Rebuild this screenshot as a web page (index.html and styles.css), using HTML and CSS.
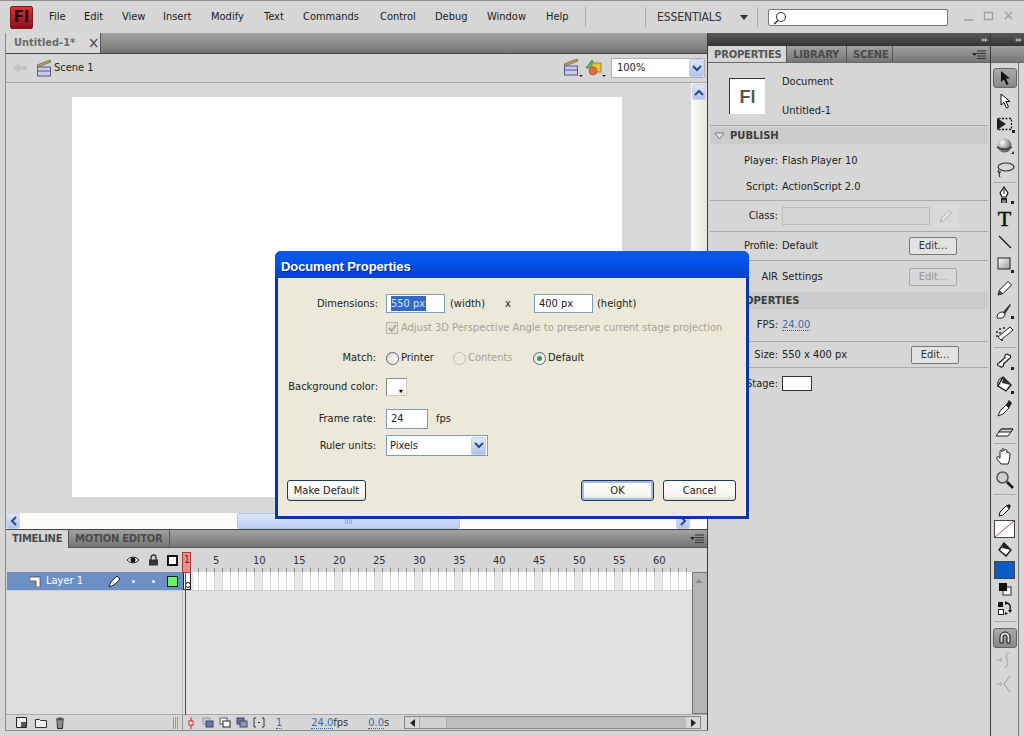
FILE: index.html
```html
<!DOCTYPE html>
<html lang="en">
<head>
<meta charset="utf-8">
<title>Adobe Flash - Document Properties</title>
<link rel="stylesheet" href="styles.css">
</head>
<body>
<div class="app">
  <header class="menubar">
    <div class="logo">Fl</div>
    <nav class="menu">
      <span class="mi m-file">File</span><span class="mi m-edit">Edit</span><span class="mi m-view">View</span><span class="mi m-insert">Insert</span><span class="mi m-modify">Modify</span><span class="mi m-text">Text</span><span class="mi m-commands">Commands</span><span class="mi m-control">Control</span><span class="mi m-debug">Debug</span><span class="mi m-window">Window</span><span class="mi m-help">Help</span>
    </nav>
    <i class="vsep s1"></i><i class="vsep s2"></i>
    <span class="essentials">ESSENTIALS</span><i class="caret"></i><i class="vsep s3"></i>
    <div class="search"><svg width="16" height="16" viewBox="0 0 16 16"><circle cx="9" cy="7" r="4.500" fill="#fff" stroke="#444" stroke-width="1.200"/><path d="M6 10.500 2 14" stroke="#333" stroke-width="1.600"/></svg></div>
    <div class="winbtns">
      <svg width="60" height="14" viewBox="0 0 60 14"><path d="M1 10h9" stroke="#a9a9a9" stroke-width="2"/><rect x="21.500" y="2.500" width="8" height="7" fill="none" stroke="#a0a0a0" stroke-width="1.400"/><path d="M42 2l7 7M49 2l-7 7" stroke="#a9a9a9" stroke-width="1.800"/></svg>
    </div>
  </header>

  <div class="main">
    <section class="left">
      <div class="doctabs"><div class="doctab"><span class="doctab-name">Untitled-1*</span><span class="doctab-x">×</span></div></div>
      <div class="scenebar">
        <svg class="back" width="16" height="12" viewBox="0 0 16 12"><path d="M1 6l6-5v3h8v4H7v3z" fill="#c2c2c2"/></svg>
        <svg class="clap" width="16" height="18" viewBox="0 0 16 18"><path d="M1 6 14 1l1 2L2 8z" fill="#b6a53a" stroke="#555" stroke-width=".6"/><rect x="1.500" y="8" width="13" height="9" fill="#c9cbe8" stroke="#55588a"/><path d="M2 12h12" stroke="#55588a"/></svg>
        <span class="scene-name">Scene 1</span>
        <span class="spacer"></span>
        <svg class="clap2" width="20" height="20" viewBox="0 0 20 20"><path d="M1 6 14 1l1 2L2 8z" fill="#b6a53a" stroke="#555" stroke-width=".6"/><rect x="1.500" y="8" width="13" height="9" fill="#c9cbe8" stroke="#55588a"/><path d="M2 12h12" stroke="#55588a"/><path d="M16 17h4l-2 2z" fill="#222"/></svg>
        <svg class="symb" width="22" height="20" viewBox="0 0 22 20"><path d="M1 10 7 2l5 8z" fill="#5eb06a" stroke="#46784a" stroke-width=".8"/><rect x="7" y="5" width="9" height="9" fill="#e6c83c" stroke="#9a8a30"/><circle cx="8" cy="13" r="4" fill="#e0703a" stroke="#a04a20" stroke-width=".6"/><path d="M17 17h4l-2 2z" fill="#222"/></svg>
        <div class="zoombox"><span class="zoomval">100%</span><span class="combo-btn"><svg width="10" height="7" viewBox="0 0 10 7"><path d="M1 1l4 4 4-4" fill="none" stroke="#2b4a80" stroke-width="2"/></svg></span></div>
      </div>
      <div class="stagewrap">
        <div class="stageview"><div class="stage"></div></div>
        <div class="vscroll"><span class="sbtn"><svg width="10" height="7" viewBox="0 0 10 7"><path d="M1 6l4-4 4 4" fill="none" stroke="#2b4a80" stroke-width="2"/></svg></span></div>
      </div>
      <div class="hscroll">
        <span class="sbtn hb"><svg width="7" height="10" viewBox="0 0 7 10"><path d="M6 1 2 5l4 4" fill="none" stroke="#2b4a80" stroke-width="2"/></svg></span>
        <span class="hthumb"><span class="grip">IIII</span></span>
        <span class="spacer"></span>
        <span class="sbtn hb"><svg width="7" height="10" viewBox="0 0 7 10"><path d="M1 1l4 4-4 4" fill="none" stroke="#2b4a80" stroke-width="2"/></svg></span>
      </div>

      <div class="tltabs">
        <span class="tltab on">TIMELINE</span><span class="tltab mot">MOTION EDITOR</span><span class="spacer"></span>
        <svg class="pmenu" width="14" height="9" viewBox="0 0 14 9"><path d="M0 3h5L2.500 6z" fill="#222"/><path d="M5 1h9M5 3.500h9M5 6h9M5 8.500h9" stroke="#333"/></svg>
      </div>
      <div class="tlgrid">
        <div class="tlhead-left">
          <svg class="eye" width="14" height="10" viewBox="0 0 14 10"><path d="M1 5q6-6 12 0-6 6-12 0z" fill="#fff" stroke="#222"/><circle cx="7" cy="5" r="2.500" fill="#111"/></svg>
          <svg class="lock" width="11" height="12" viewBox="0 0 11 12"><path d="M3 6V3.500a2.500 2.500 0 0 1 5 0V6" fill="none" stroke="#333" stroke-width="1.400"/><rect x="1" y="5.500" width="9" height="6" fill="#333"/></svg>
          <span class="outline"></span>
        </div>
        <div class="ruler">
          <div class="ruler-nums"><span class="n">5</span><span class="n">10</span><span class="n">15</span><span class="n">20</span><span class="n">25</span><span class="n">30</span><span class="n">35</span><span class="n">40</span><span class="n">45</span><span class="n">50</span><span class="n">55</span><span class="n">60</span></div>
          <div class="ticks"></div>
        </div>
        <div class="tlscroll"><svg width="12" height="8" viewBox="0 0 12 8"><path d="M2 6l4-4 4 4z" fill="#8a8a8a"/></svg></div>
        <div class="layer">
          <svg class="lay-ic" width="11" height="11" viewBox="0 0 11 11"><path d="M0 1h10v10H6V5H0z" fill="#fff" stroke="#333" stroke-width=".7"/></svg>
          <span class="lay-name">Layer 1</span>
          <svg class="lay-pen" width="13" height="13" viewBox="0 0 13 13"><path d="M1 12l2-5 6-6 3 3-6 6z" fill="#fff" stroke="#222"/></svg>
          <i class="dot d1"></i><i class="dot d2"></i><span class="lay-col"></span>
        </div>
        <div class="frames"><span class="kf"></span></div>
        <div class="tlbody-left"></div>
        <div class="tlbody-right"></div>
        <div class="tlfoot-left">
          <svg class="f1" width="11" height="11" viewBox="0 0 11 11"><path d="M.5.500h10v10H.5z" fill="#eee" stroke="#222"/><path d="M5 5h5v5H5z" fill="#555"/></svg>
          <svg class="f2" width="12" height="10" viewBox="0 0 12 10"><path d="M.5 1.500h4l1 1h6v7H.5z" fill="#eee" stroke="#333"/></svg>
          <svg class="f3" width="10" height="12" viewBox="0 0 10 12"><path d="M2 3h6l-.5 8.500h-5zM1 2h8M3.500 1h3M4 4v7M6 4v7" fill="#eee" stroke="#222"/></svg>
          <span class="grip-v"></span>
        </div>
        <div class="tlfoot-right">
          <svg class="ok-m" width="6" height="12" viewBox="0 0 6 12"><path d="M3 0v12" stroke="#c8242a"/><rect x="1" y="4" width="4" height="4" fill="#fff" stroke="#c8242a"/></svg>
          <svg class="on1" width="12" height="11" viewBox="0 0 12 11"><rect x="1" y="1" width="7" height="6" fill="#ccd" stroke="#99a"/><rect x="4" y="4" width="7" height="6" fill="#667ab0" stroke="#445"/></svg>
          <svg class="on2" width="12" height="11" viewBox="0 0 12 11"><rect x="1" y="1" width="7" height="6" fill="#fff" stroke="#556"/><rect x="4" y="4" width="7" height="6" fill="#fff" stroke="#223"/></svg>
          <svg class="on3" width="12" height="11" viewBox="0 0 12 11"><rect x="1" y="1" width="7" height="6" fill="#667ab0" stroke="#445"/><rect x="4" y="4" width="7" height="6" fill="#8a98c4" stroke="#445"/></svg>
          <svg class="on4" width="12" height="11" viewBox="0 0 12 11"><path d="M3 1H1v9h2M9 1h2v9H9" fill="none" stroke="#334"/><path d="M5 5.500h2" stroke="#334"/></svg>
          <span class="lnk cur">1</span><span class="lnk fps">24.0</span><span class="unit">fps</span><span class="lnk sec">0.0</span><span class="unit">s</span>
          <div class="fscroll"><span class="fs-arrow"><svg width="5" height="8" viewBox="0 0 5 8"><path d="M5 0v8L0 4z" fill="#222"/></svg></span><span class="fs-thumb"></span><span class="spacer"></span><span class="fs-end"><svg width="5" height="8" viewBox="0 0 5 8"><path d="M0 0v8l5-4z" fill="#222"/></svg></span></div>
        </div>
        <div class="playhead"><span class="ph-num">1</span></div>
      </div>
    </section>

    <aside class="panel">
      <div class="darkbar"><span class="dbl">▸▸</span></div>
      <div class="ptabs">
        <span class="ptab on">PROPERTIES</span><span class="ptab lib">LIBRARY</span><span class="ptab sce">SCENE</span><span class="spacer"></span>
        <svg class="pmenu" width="14" height="9" viewBox="0 0 14 9"><path d="M0 3h5L2.500 6z" fill="#222"/><path d="M5 1h9M5 3.500h9M5 6h9M5 8.500h9" stroke="#333"/></svg>
      </div>
      <div class="dochead">
        <div class="flicon">Fl</div>
        <div class="docinfo"><span>Document</span><span>Untitled-1</span></div>
      </div>
      <div class="sechead"><svg width="11" height="8" viewBox="0 0 11 8"><path d="M1 1h9L5.500 7z" fill="#e8e8e8" stroke="#777"/></svg><span>PUBLISH</span></div>
      <div class="prow r-player"><label>Player:</label><span>Flash Player 10</span></div>
      <div class="prow r-script line"><label>Script:</label><span>ActionScript 2.0</span></div>
      <div class="prow r-class line"><label>Class:</label><span class="classbox"></span><span class="penbtn"><svg width="14" height="14" viewBox="0 0 14 14"><path d="M1 13l1.500-4L10 1.500l2.500 2.500L5 11.500z" fill="#e6e6e6" stroke="#a8a8a8"/></svg></span></div>
      <div class="prow r-profile line"><label>Profile:</label><span>Default</span><span class="spacer"></span><span class="editbtn">Edit...</span></div>
      <div class="prow r-air"><label>AIR</label><span>Settings</span><span class="spacer"></span><span class="editbtn dis">Edit...</span></div>
      <div class="sechead r-prop"><svg width="11" height="8" viewBox="0 0 11 8"><path d="M1 1h9L5.500 7z" fill="#e8e8e8" stroke="#777"/></svg><span>PROPERTIES</span></div>
      <div class="prow r-fps line"><label>FPS:</label><span class="lnk">24.00</span></div>
      <div class="prow r-size line"><label>Size:</label><span>550 x 400 px</span><span class="spacer"></span><span class="editbtn">Edit...</span></div>
      <div class="prow r-stage"><label>Stage:</label><span class="stageswatch"></span></div>
    </aside>

    <aside class="tools">
      <div class="darkbar"><span class="dbl">▸▸</span></div>
      <div class="ttab"></div>
      <div class="toolcol">
        <span class="tool active"><svg width="16" height="16" viewBox="0 0 16 16"><path d="M4 1v11l3-2.500L9.500 15l2-1L9 8.500h4z" fill="#111"/></svg></span>
        <span class="tool"><svg width="16" height="16" viewBox="0 0 16 16"><path d="M4 1v11l3-2.500L9.500 15l2-1L9 8.500h4z" fill="#fff" stroke="#111"/></svg></span>
        <span class="tool"><svg width="20" height="18" viewBox="0 0 20 18"><path d="M2 3l9 6-9 6z" fill="#222"/><rect x="3.500" y="3.500" width="13" height="11" fill="none" stroke="#111" stroke-dasharray="2 1.500" stroke-width="1.300"/><path d="M17 15h3v3h-3z" fill="#222"/></svg></span>
        <span class="tool"><svg width="20" height="20" viewBox="0 0 20 20"><defs><radialGradient id="ball" cx=".35" cy=".3" r=".8"><stop offset="0" stop-color="#fff"/><stop offset="1" stop-color="#444"/></radialGradient></defs><circle cx="9.500" cy="8.500" r="7" fill="url(#ball)"/><path d="M2 10c3 3 11 3 15 0" fill="none" stroke="#333" stroke-width="1.400"/><path d="M16 17h3v-3z" fill="#222"/></svg></span>
        <span class="tool"><svg width="20" height="18" viewBox="0 0 20 18"><ellipse cx="11" cy="6" rx="8" ry="4" fill="none" stroke="#333" stroke-width="1.200"/><path d="M4 9c-2 2 0 3 1 2s-2 2 0 5" fill="none" stroke="#333" stroke-width="1.200"/></svg></span>
        <i class="tsep s-a"></i>
        <span class="tool"><svg width="20" height="20" viewBox="0 0 20 20"><path d="M9 1l4 6-2 4H7L5 7z" fill="#fff" stroke="#111" stroke-width="1.200"/><path d="M9 3v5" stroke="#111"/><path d="M6 12h6v5h-1.500v-3h-1v3h-1v-3h-1v3H6z" fill="#222"/><path d="M16 15h3v3h-3z" fill="#222"/></svg></span>
        <span class="tool tchar">T</span>
        <span class="tool"><svg width="16" height="16" viewBox="0 0 16 16"><path d="M2 2l12 12" stroke="#111" stroke-width="1.200"/></svg></span>
        <span class="tool"><svg width="20" height="18" viewBox="0 0 20 18"><defs><linearGradient id="rg" x1="0" y1="0" x2="1" y2="1"><stop offset="0" stop-color="#fff"/><stop offset="1" stop-color="#999"/></linearGradient></defs><rect x="3" y="2" width="12" height="11" fill="url(#rg)" stroke="#222"/><path d="M16 14h3v3h-3z" fill="#222"/></svg></span>
        <span class="tool"><svg width="16" height="16" viewBox="0 0 16 16"><path d="M1 15l1.500-5L11 1.500 14.500 5 6 13.500z" fill="#fff" stroke="#111"/><path d="M1 15l1.500-5 3.500 3.500z" fill="#444"/></svg></span>
        <span class="tool"><svg width="20" height="18" viewBox="0 0 20 18"><path d="M2 16c0-5 3-6 6-6l2 2c0 3-3 5-8 4z" fill="#eee" stroke="#222"/><path d="M8 10l7-8 1 1-6 9z" fill="#333"/><path d="M16 14h3v3h-3z" fill="#222"/></svg></span>
        <span class="tool"><svg width="20" height="16" viewBox="0 0 20 16"><path d="M6 14l-3-3L15 1l3 3z" fill="#fff" stroke="#222"/><g fill="#222"><circle cx="2" cy="6" r="1"/><circle cx="5" cy="3" r="1"/><circle cx="9" cy="2" r="1"/><circle cx="2" cy="10" r="1"/><circle cx="5" cy="7" r="1"/><circle cx="7" cy="14" r="1"/></g></svg></span>
        <i class="tsep s-b"></i>
        <span class="tool"><svg width="20" height="18" viewBox="0 0 20 18"><path d="M4 10 10 4.500C9 2 12 0 13.500 2c2-.5 3 2 1 3.500L8.500 11c1 3-3 4-4 2-2.500 0-2.500-3-.5-3z" fill="#fff" stroke="#222" stroke-width="1.200"/><path d="M16 14h3v3h-3z" fill="#222"/></svg></span>
        <span class="tool"><svg width="20" height="20" viewBox="0 0 20 20"><path d="M8 2l8 8-5 6-8-5z" fill="#fff" stroke="#111" stroke-width="1.300"/><path d="M3 11c-1-4 1-8 4-8" fill="none" stroke="#111"/><path d="M8 2l8 8-9-2z" fill="#333"/><path d="M16 16h3v3h-3z" fill="#222"/></svg></span>
        <span class="tool"><svg width="16" height="18" viewBox="0 0 16 18"><path d="M1 17l2-5 6-6 3 3-6 6z" fill="#fff" stroke="#222"/><path d="M9 6l3-5 3 3-3 5z" fill="#222"/></svg></span>
        <span class="tool"><svg width="20" height="16" viewBox="0 0 20 16"><path d="M1 13l5-7h12l-5 7z" fill="#fff" stroke="#222"/><path d="M6 6h12l-2 3H4z" fill="#ccc" stroke="#222"/></svg></span>
        <i class="tsep s-c"></i>
        <span class="tool"><svg width="20" height="20" viewBox="0 0 20 20"><path d="M6 17c-2-3-5-5-4-7 1-1 2 0 3 1V5c0-2 2-2 2 0V3c0-2 2-2 2 0v1c0-2 3-2 3 0v2c0-1 3-1 3 1 0 4-1 7-2 10z" fill="#fff" stroke="#222"/></svg></span>
        <span class="tool"><svg width="20" height="20" viewBox="0 0 20 20"><circle cx="7.500" cy="7.500" r="5.500" fill="#cfcfcf" stroke="#555" stroke-width="1.500"/><path d="M12 12l6 6" stroke="#111" stroke-width="2.500"/></svg></span>
        <i class="tsep s-d"></i>
        <span class="tool short"><svg width="16" height="14" viewBox="0 0 16 14"><path d="M2 13l1-4 7-7 3 3-7 7z" fill="#fff" stroke="#111"/><path d="M9 3l3 3 2-3-2-2z" fill="#222"/></svg></span>
        <span class="swatch stroke"><svg width="19" height="16" viewBox="0 0 19 16" preserveAspectRatio="none"><path d="M0 16 19 0" stroke="#b4453f"/></svg></span>
        <span class="tool"><svg width="16" height="16" viewBox="0 0 16 16"><path d="M7 1l7 7-5 6-7-6z" fill="#fff" stroke="#111" stroke-width="1.300"/><path d="M7 1l7 7-9-2z" fill="#222"/></svg></span>
        <span class="swatch fill"></span>
        <span class="tool mini"><svg width="14" height="14" viewBox="0 0 14 14"><rect x="5" y="5" width="8" height="8" fill="#fff" stroke="#222"/><rect x="1" y="1" width="8" height="8" fill="#111"/></svg></span>
        <span class="tool mini2"><svg width="16" height="14" viewBox="0 0 16 14"><rect x="1" y="1" width="5" height="5" fill="#111"/><rect x="1.500" y="8.500" width="5" height="5" fill="#fff" stroke="#222"/><path d="M9 2c4 0 5 3 4 7" fill="none" stroke="#111" stroke-width="1.400"/><path d="M8 0v4l3-2zM11 9h4l-2 3zM8 11v3l3-1.500z" fill="#111"/></svg></span>
        <i class="tsep s-e"></i>
        <span class="tool magnet"><svg width="16" height="16" viewBox="0 0 16 16"><path d="M3 13V7a5 5 0 0 1 10 0v6h-3V7a2 2 0 0 0-4 0v6z" fill="#dedede" stroke="#111"/></svg></span>
        <span class="tool"><svg width="20" height="20" viewBox="0 0 20 20"><path d="M14 2c-8 2 4 8-4 15" fill="none" stroke="#b0b0b0" stroke-width="1.400"/><path d="M1 9h6M5 7l2 2-2 2" fill="none" stroke="#a8a8a8"/></svg></span>
        <span class="tool"><svg width="20" height="20" viewBox="0 0 20 20"><path d="M15 2 9 10l6 8" fill="none" stroke="#b0b0b0" stroke-width="1.400"/><path d="M1 10h6M5 8l2 2-2 2" fill="none" stroke="#a8a8a8"/></svg></span>
      </div>
    </aside>
  </div>

  <div class="dialog">
    <div class="dlg-title">Document Properties</div>
    <div class="dlg-body">
      <div class="drow d-dim"><label>Dimensions:</label><span class="tb w-dim"><span class="sel">550 px</span></span><span class="t-w">(width)</span><span class="t-x">x</span><span class="tb w-dim"><span class="val">400 px</span></span><span class="t-h">(height)</span></div>
      <div class="drow d-chk"><label></label><span class="chk"><svg width="11" height="11" viewBox="0 0 11 11"><path d="M2 5l2.500 3L9 2" fill="none" stroke="#a8a8a0" stroke-width="2"/></svg></span><span class="dis-t">Adjust 3D Perspective Angle to preserve current stage projection</span></div>
      <div class="drow d-match"><label class="lb2">Match:</label><span class="radio"></span><span class="r-t t1">Printer</span><span class="radio off"></span><span class="r-t t2 dis-t">Contents</span><span class="radio on"></span><span class="r-t">Default</span></div>
      <div class="drow d-bg"><label>Background color:</label><span class="colorbtn"><i class="cb-arrow"></i></span></div>
      <div class="drow d-fr"><label class="lb2">Frame rate:</label><span class="tb w-fr"><span class="val">24</span></span><span class="t-fps">fps</span></div>
      <div class="drow d-ru"><label class="lb2">Ruler units:</label><span class="select"><span class="sel-v">Pixels</span><span class="combo-btn"><svg width="10" height="7" viewBox="0 0 10 7"><path d="M1 1l4 4 4-4" fill="none" stroke="#2b4a80" stroke-width="2"/></svg></span></span></div>
      <div class="dbtns"><span class="xpbtn b-make">Make Default</span><span class="spacer"></span><span class="xpbtn b-act b-ok">OK</span><span class="xpbtn b-act">Cancel</span></div>
    </div>
  </div>
</div>
</body>
</html>
```
FILE: styles.css
```css
* { box-sizing: border-box; }
html, body { margin: 0; padding: 0; }
body { background: #d6d6d6; font: 11px/14px "DejaVu Sans Condensed", "DejaVu Sans", sans-serif; font-stretch: condensed; color: #222; }
svg { display: block; flex: none; }
.spacer { flex: 1; }
.app { position: relative; width: 1024px; height: 736px; overflow: hidden; display: flex; flex-direction: column; background: #d6d6d6; border-top: 1px solid #8f8f8f; }

/* menu bar */
.menubar { height: 32px; display: flex; align-items: center; position: relative; }
.logo { width: 23px; height: 23px; margin-left: 10px; background: linear-gradient(#e0303c, #8d0f1c); border: 1px solid #7c1a20; border-radius: 2px; color: #260404; font: bold 15px/21px "DejaVu Sans", sans-serif; text-align: center; }
.menu { display: flex; margin-left: 16px; }
.mi { color: #1c1c1c; }
.m-file { width: 35px; } .m-edit { width: 38px; } .m-view { width: 41px; } .m-insert { width: 48px; } .m-modify { width: 53px; }
.m-text { width: 39px; } .m-commands { width: 77px; } .m-control { width: 55px; } .m-debug { width: 52px; } .m-window { width: 59px; } .m-help { width: 39px; }
.vsep { width: 1px; height: 20px; background: #aaa; }
.s1 { margin-left: 0; } .s2 { margin-left: 59px; }
.essentials { margin-left: 11px; width: 83px; font: 12px/14px "DejaVu Sans Condensed", "DejaVu Sans", sans-serif; letter-spacing: -.1px; color: #333; }
.caret { width: 0; height: 0; border: 4px solid transparent; border-top: 5px solid #333; border-bottom: 0; }
.s3 { margin-left: 9px; }
.search { margin-left: 10px; width: 180px; height: 17px; background: #fff; border: 1px solid #777; border-radius: 2px; padding-left: 3px; }
.winbtns { margin-left: 15px; }

/* main layout */
.main { flex: 1; display: flex; padding-left: 5px; min-height: 0; }
.left { width: 703px; display: flex; flex-direction: column; border-right: 1px solid #3c3c3c; border-left: 1px solid #8a8a8a; height: 698px; border-bottom: 1px solid #8a8a8a; }
.doctabs { height: 21px; flex: none; background: linear-gradient(#a2a2a2, #757575); border-bottom: 1px solid #444; }
.doctab { width: 95px; height: 20px; background: #d8d8d8; display: flex; align-items: center; padding-left: 8px; border-right: 1px solid #555; }
.doctab-name { width: 74px; font-weight: bold; color: #6b6b6b; font-size: 11px; }
.doctab-x { font-size: 15px; color: #444; }
.scenebar { height: 29px; flex: none; display: flex; align-items: center; border-bottom: 1px solid #a8a8a8; padding-left: 6px; }
.back { margin-right: 14px; }
.clap { margin-right: 2px; margin-left: -6px; }
.clap2 { margin-right: 2px; }
.symb { margin-right: 0; }
.scene-name { color: #222; }
.zoombox { width: 94px; height: 20px; margin-left: 4px; margin-right: 2px; background: #fff; border: 1px solid #b0b0b0; display: flex; align-items: center; justify-content: space-between; padding-left: 5px; }
.combo-btn { width: 15px; height: 18px; background: linear-gradient(#dfe7f9, #b0c2ea); border: 1px solid #c6d2ee; border-radius: 2px; display: flex; align-items: center; justify-content: center; }
.stagewrap { height: 430px; flex: none; display: flex; }
.stageview { flex: 1; padding: 14px 0 0 66px; background: #d8d8d8; }
.stage { width: 550px; height: 400px; background: #fff; }
.vscroll { width: 16px; background: linear-gradient(90deg, #fdfcf6, #e8e6dc); padding: 1px; }
.sbtn { display: flex; align-items: center; justify-content: center; width: 14px; height: 16px; background: linear-gradient(#dfe7f9, #b0c2ea); border: 1px solid #c6d2ee; border-radius: 2px; }
.hscroll { height: 16px; flex: none; display: flex; background: #fdfcf6; padding-right: 17px; }
.hthumb { margin-left: 217px; width: 223px; background: linear-gradient(#dce6fb, #bccdf2); border: 1px solid #b4c5ea; border-radius: 2px; text-align: center; }
.grip { font-size: 8px; line-height: 12px; color: #8a9bc0; }

/* timeline */
.tltabs { height: 19px; flex: none; display: flex; background: linear-gradient(#a2a2a2, #757575); border-top: 1px solid #444; border-bottom: 1px solid #555; align-items: center; padding-right: 2px; }
.tltab { height: 18px; padding: 0 6px; font: bold 10px/18px "DejaVu Sans", sans-serif; letter-spacing: -.3px; color: #4a4a4a; border-right: 1px solid #555; width: 101px; white-space: nowrap; }
.tltab.on { background: #d6d6d6; width: 63px; }
.pmenu { margin-right: 1px; }
.tlgrid { position: relative; flex: 1; display: grid; grid-template-columns: 177px 509px 15px; grid-template-rows: 24px 19px 1fr 16px; }
.tlhead-left { grid-column: 1; grid-row: 1; display: flex; align-items: center; padding-left: 120px; position: relative; }
.lock { margin-left: 8px; }
.outline { width: 11px; height: 11px; border: 2px solid #111; margin-left: 8px; background: #fff; }
.ruler { grid-column: 2; grid-row: 1; display: flex; flex-direction: column; }
.ruler-nums { flex: 1; display: flex; padding-top: 6px; padding-left: 30px; }
.n { width: 40px; flex: none; color: #333; }
.ticks { height: 4px; background: repeating-linear-gradient(90deg, #d6d6d6 0 7px, #888 7px 8px); }
.tlscroll { grid-column: 3; grid-row: 2 / 4; background: #b4b4b4; border: 1px solid #777; border-right: 0; }
.tlscroll svg { margin: 4px 0 4px; }
.tlscroll::before { content: ""; display: none; }
.layer { grid-column: 1; grid-row: 2; margin-left: 1px; background: #6c90c4; display: flex; align-items: center; position: relative; border-bottom: 1px solid #ccc; }
.lay-ic { margin-left: 23px; }
.lay-name { margin-left: 5px; color: #fff; width: 62px; }
.dot { width: 3px; height: 3px; border-radius: 50%; background: #fff; flex: none; }
.d1 { margin-left: 11px; } .d2 { margin-left: 17px; }
.lay-col { width: 11px; height: 11px; margin-left: 12px; background: #66f266; border: 1px solid #111; }
.frames { grid-column: 2; grid-row: 2; position: relative; border-bottom: 1px solid #ccc; background:
  repeating-linear-gradient(90deg, transparent 0 7px, #d4d4d4 7px 8px),
  repeating-linear-gradient(90deg, #e8e8e8 0 8px, #fff 8px 40px);
  background-position: 0 0, 32px 0; }
.kf { position: absolute; left: 0; top: 0; width: 8px; height: 18px; background: #fff; border: 1px solid #222; }
.kf::after { content: ""; position: absolute; left: 1px; top: 9px; width: 4px; height: 4px; border: 1px solid #111; border-radius: 50%; }
.tlbody-left { grid-column: 1; grid-row: 3; background: #dedede; margin-left: 1px; border-right: 1px solid #bbb; }
.tlbody-right { grid-column: 2; grid-row: 3; background: #e2e2e2; }
.tlfoot-left { grid-column: 1; grid-row: 4; display: flex; align-items: center; padding-left: 10px; border-top: 1px solid #aaa; border-right: 1px solid #999; }
.f2 { margin-left: 8px; } .f3 { margin-left: 8px; }
.grip-v { width: 5px; height: 12px; margin-left: 108px; background: repeating-linear-gradient(90deg, #999 0 1px, #ddd 1px 2px); }
.tlfoot-right { grid-column: 2 / 4; grid-row: 4; display: flex; align-items: center; border-top: 1px solid #aaa; padding-left: 5px; }
.on1 { margin-left: 8px; } .on2, .on3, .on4 { margin-left: 5px; }
.lnk { color: #3a6aa8; border-bottom: 1px dotted #3a6aa8; line-height: 11px; }
.unit { color: #333; }
.cur { margin-left: 11px; } .fps { margin-left: 29px; } .sec { margin-left: 20px; }
.fscroll { width: 297px; height: 13px; margin-left: 15px; display: flex; background: #bdbdbd; border: 1px solid #888; }
.fs-arrow, .fs-end { width: 14px; display: flex; align-items: center; justify-content: center; background: #d6d6d6; }
.fs-thumb { width: 28px; background: #d0d0d0; border: 1px solid #aaa; border-width: 0 1px; }
.playhead { position: absolute; left: 176px; top: 4px; width: 9px; height: 21px; background: #f78c8c; border: 1px solid #a03c3c; }
.playhead::after { content: ""; position: absolute; left: 2px; top: 19px; width: 1px; height: 143px; background: #c41818; }
.ph-num { position: absolute; left: 1px; top: 0; font-size: 10px; color: #333; }

/* properties */
.panel { width: 283px; flex: none; display: flex; flex-direction: column; border-right: 1px solid #3c3c3c; height: 703px; }
.darkbar { height: 13px; flex: none; background: linear-gradient(#5a5a5a, #333); color: #aaa; font-size: 8px; line-height: 13px; text-align: right; padding-right: 3px; }
.dbl { letter-spacing: -1px; }
.ptabs { height: 17px; flex: none; display: flex; align-items: center; background: linear-gradient(#a2a2a2, #757575); border-bottom: 1px solid #666; padding-right: 3px; }
.ptab { height: 16px; font: bold 10px/18px "DejaVu Sans", sans-serif; letter-spacing: -.2px; color: #4a4a4a; padding: 0 6px; border-right: 1px solid #555; }
.ptab.on { width: 79px; background: #d6d6d6; color: #555; }
.lib { width: 60px; } .sce { width: 46px; }
.dochead { height: 63px; flex: none; display: flex; margin: 0 2px; border-bottom: 1px solid #aaa; padding: 15px 0 0 19px; }
.flicon { width: 36px; height: 36px; background: #fff; border-top: 1px solid #333; border-left: 1px solid #333; color: #555; font: bold 18px/36px "Liberation Sans", sans-serif; text-align: center; }
.docinfo { display: flex; flex-direction: column; margin-left: 17px; gap: 15px; margin-top: -3px; }
.sechead { height: 17px; flex: none; margin: 1px 2px 0; background: #cbcbcb; display: flex; align-items: center; gap: 5px; padding-left: 4px; font: bold 10px/17px "DejaVu Sans", sans-serif; color: #3c3c3c; }
.prow { display: flex; align-items: center; flex: none; margin: 0 2px; padding-right: 31px; }
.prow label { width: 68px; text-align: right; margin-right: 4px; }
.line { border-bottom: 1px solid #aaa; }
.r-player { height: 26px; margin-top: 4px; }
.r-script { height: 27px; }
.r-class { height: 31px; padding-right: 0; }
.r-profile { height: 29px; }
.r-air { height: 31px; }
.r-prop { margin-top: 0; }
.r-fps { height: 33px; }
.r-size { height: 26px; }
.r-stage { height: 31px; }
.classbox { width: 148px; height: 18px; background: #d6d6d6; border: 1px solid #bcbcb4; }
.penbtn { width: 24px; height: 24px; margin-left: 4px; background: #dadada; display: flex; align-items: center; justify-content: center; }
.editbtn { width: 48px; height: 18px; background: #e2e2e2; border: 1px solid #777; border-radius: 2px; text-align: center; line-height: 16px; color: #333; }
.editbtn.dis { color: #999; border-color: #aaa; background: #d8d8d8; }
.r-size .editbtn { margin-right: -2px; }
.stageswatch { width: 30px; height: 15px; background: #fff; border: 1px solid #333; }

/* tools */
.tools { width: 33px; flex: none; display: flex; flex-direction: column; height: 703px; }
.ttab { height: 17px; flex: none; background: linear-gradient(#a2a2a2, #757575); border-bottom: 1px solid #666; }
.toolcol { width: 28px; flex: 1; border-right: 1px solid #777; display: flex; flex-direction: column; align-items: center; padding-top: 3px; }
.tool { height: 23px; width: 24px; flex: none; display: flex; align-items: center; justify-content: center; }
.tool.active, .tool.magnet { background: linear-gradient(#aaa, #888); border: 1px solid #666; border-radius: 3px; height: 20px; margin: 2px 0 1px; }
.tool.short { height: 21px; }
.tool.mini { height: 20px; }
.tool.mini2 { height: 17px; }
.tchar { font: 22px/23px "Liberation Serif", serif; font-stretch: normal; color: #111; -webkit-text-stroke: .5px #111; }
.tsep { width: 22px; height: 1px; background: #aaa; flex: none; }
.s-a { margin: 1px 0; } .s-b { margin: 2px 0; } .s-c { margin: 1px 0; } .s-d { margin: 3px 0 4px; } .s-e { margin: 5px 0 4px; }
.swatch { width: 21px; height: 18px; flex: none; border: 1px solid #444; display: block; }
.swatch.stroke { background: #fff; }
.swatch.fill { background: #0a5cc4; }

/* dialog */
.dialog { position: absolute; left: 275px; top: 250px; width: 474px; height: 268px; display: flex; flex-direction: column; background: #0a36a8; border-radius: 6px 6px 0 0; }
.dlg-title { height: 27px; flex: none; color: #fff; font: bold 13px/31px "Liberation Sans", sans-serif; padding-left: 6px; background: linear-gradient(#0a5ae0, #0453ee 40%, #0a40c8); border-radius: 6px 6px 0 0; text-shadow: 1px 1px 0 #0a2a80; letter-spacing: -.1px; }
.dlg-body { flex: 1; margin: 0 3px 3px; background: #ece9d8; padding-top: 16px; color: #222; }
.drow { display: flex; align-items: center; }
.drow label { width: 100px; margin-right: 8px; text-align: right; flex: none; }
.drow .lb2 { padding-right: 2px; }
.d-dim { height: 19px; }
.d-chk { height: 18px; margin-top: 6px; }
.d-match { height: 18px; margin-top: 12px; }
.d-bg { height: 18px; margin-top: 11px; }
.d-fr { height: 20px; margin-top: 13px; }
.d-ru { height: 21px; margin-top: 6px; }
.tb { height: 100%; background: #fff; border: 1px solid #7f9db9; display: flex; align-items: center; padding-left: 4px; }
.w-dim { width: 59px; }
.w-fr { width: 42px; }
.sel { background: #316ac5; color: #d8e2f2; padding-right: 1px; line-height: 15px; }
.t-w { margin-left: 5px; width: 55px; }
.t-x { width: 29px; }
.t-h { margin-left: 4px; }
.t-fps { margin-left: 8px; }
.chk { width: 12px; height: 12px; border: 1px solid #b8b8ac; background: #e6e3d4; display: flex; align-items: center; justify-content: center; margin-right: 3px; }
.dis-t { color: #a6a498; }
.radio { width: 13px; height: 13px; flex: none; border: 1px solid #4a6a88; border-radius: 50%; background: linear-gradient(135deg, #dcd9cc, #fff); }
.radio.off { border-color: #c0beb0; background: #ece9d8; }
.radio.on::after { content: ""; display: block; width: 5px; height: 5px; margin: 3px; border-radius: 50%; background: #3a9a4a; }
.r-t { margin-left: 2px; }
.t1 { width: 52px; }
.t2 { width: 65px; }
.colorbtn { position: relative; width: 21px; height: 18px; background: #fff; border: 1px solid #8a8a80; border-right-color: #ccc; border-bottom-color: #ccc; }
.cb-arrow { position: absolute; right: 1px; bottom: 1px; width: 7px; height: 5px; background: #ece9d8; }
.cb-arrow::after { content: ""; position: absolute; left: 1px; top: 1px; border: 2.500px solid transparent; border-top: 3px solid #111; border-bottom: 0; }
.select { width: 102px; height: 21px; background: #fff; border: 1px solid #7f9db9; display: flex; align-items: center; justify-content: space-between; padding-left: 3px; padding-right: 1px; }
.dbtns { display: flex; margin-top: 24px; padding: 0 10px 0 9px; gap: 9px; }
.xpbtn { height: 21px; border: 1px solid #1c3a5c; border-radius: 3px; background: linear-gradient(#fff, #f4f3ee 80%, #dcd8ca); text-align: center; line-height: 19px; color: #222; }
.b-make { width: 79px; }
.b-act { width: 73px; }
.b-ok { box-shadow: inset 0 0 0 2px #a6bce8; }
```
